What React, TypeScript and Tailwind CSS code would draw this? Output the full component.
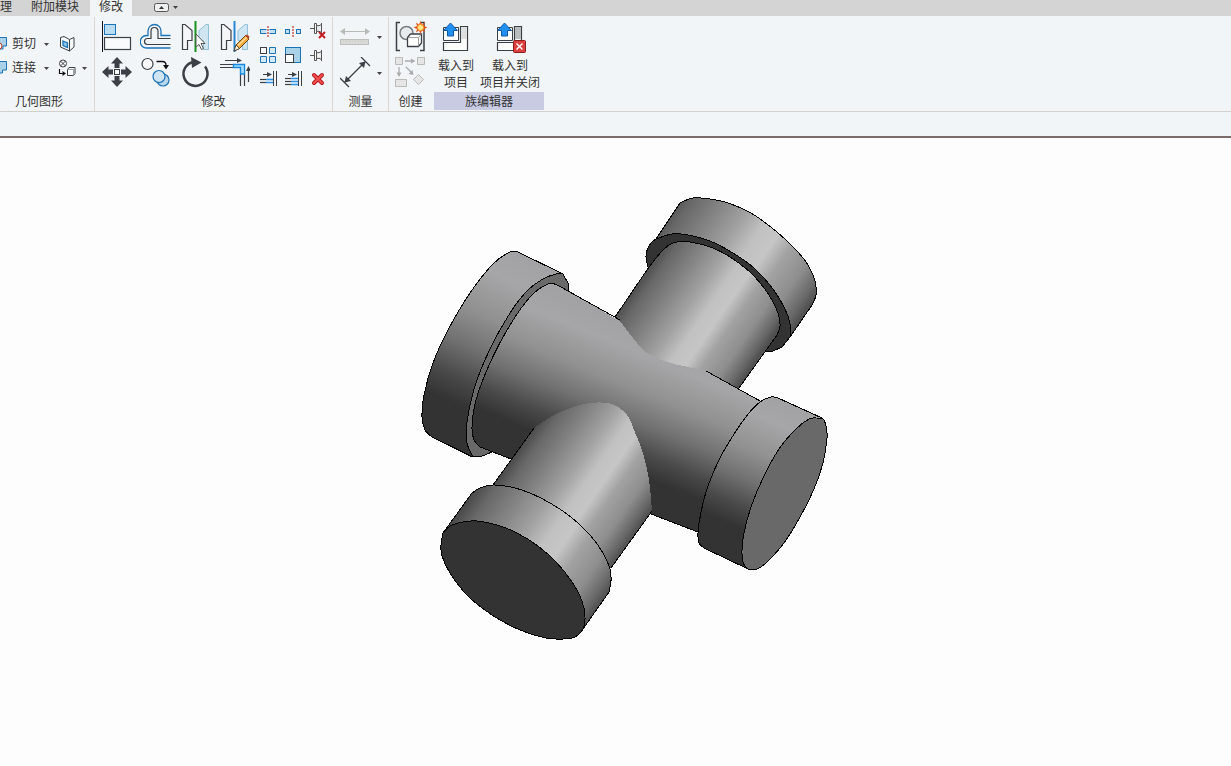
import type { ReactNode } from "react";

type Point = [number, number];

const INK = "#3b4046";
const BLUE = "#1b73b8";
const SKY = "#b9dcf0";

// Catmull-Rom through the points, returned as the tail of a path
function curve(pts: Point[]) {
  let d = "";
  for (let i = 0; i < pts.length - 1; i++) {
    const p0 = pts[i - 1] ?? pts[i];
    const p1 = pts[i];
    const p2 = pts[i + 1];
    const p3 = pts[i + 2] ?? p2;
    d += `C${p1[0] + (p2[0] - p0[0]) / 6} ${p1[1] + (p2[1] - p0[1]) / 6} ${p2[0] - (p3[0] - p1[0]) / 6} ${p2[1] - (p3[1] - p1[1]) / 6} ${p2[0]} ${p2[1]}`;
  }
  return d;
}

const open = (pts: Point[]) => `M${pts[0][0]} ${pts[0][1]}${curve(pts)}`;
const join = (pts: Point[]) => `L${pts[0][0]} ${pts[0][1]}${curve(pts)}`;

function Icon({ size = 32, children }: { size?: number; children: ReactNode }) {
  return (
    <svg width={size} height={size} viewBox={`0 0 ${size} ${size}`} fill="none" className="shrink-0" aria-hidden="true">
      {children}
    </svg>
  );
}

function Tool({ label, children }: { label: string; children: ReactNode }) {
  return (
    <button type="button" title={label} aria-label={label} className="flex items-center justify-center hover:bg-[#dce9f5]">
      {children}
    </button>
  );
}

function Caret() {
  return (
    <svg width="5" height="3" viewBox="0 0 5 3" className="shrink-0" aria-hidden="true">
      <path d="M0 0h5L2.5 3z" fill="#444" />
    </svg>
  );
}

function Panel({ title, highlight, className = "", children }: { title: string; highlight?: boolean; className?: string; children: ReactNode }) {
  return (
    <section className={`flex shrink-0 flex-col border-[#dcd6d2] ${className}`}>
      <div className="h-[75px]">{children}</div>
      <h2 className={`h-[18px] text-center leading-5 ${highlight ? "bg-[#c9cbe2]" : ""}`}>{title}</h2>
    </section>
  );
}

function AlignIcon() {
  return (
    <Icon>
      <path d="M1.5 0v31" stroke="#111" />
      <rect x="3.5" y="3.5" width="11" height="10" fill={SKY} stroke={BLUE} />
      <rect x="3.5" y="16.5" width="26" height="12" fill="#f8fafb" stroke={INK} strokeWidth="1.2" />
    </Icon>
  );
}

function OffsetIcon() {
  return (
    <Icon>
      <path d="M30.5 14.5H21V10a6.5 6.5 0 0 0-13 0v4.5H6.5a6 6 0 0 0 0 12.5h24" stroke={BLUE} strokeWidth="1.3" />
      <path d="M30.5 17.5H18V10a3.5 3.5 0 0 0-7 0v7.5H7.5a3 3 0 0 0 0 6h23" stroke={INK} strokeWidth="1.2" />
    </Icon>
  );
}

function MirrorHalves() {
  return (
    <>
      <path d="M3.5 3.5H6l7 6v10H8.5v9h-5z" fill="#f4f6f7" stroke={INK} strokeWidth="1.2" />
      <path d="M29.5 3.5H27l-7 6v10h4.5v9h5z" fill="#cfe6f2" stroke="#8fc0d8" />
    </>
  );
}

function MirrorPickIcon() {
  return (
    <Icon>
      <MirrorHalves />
      <path d="M16.5 0v31" stroke="#17921b" strokeWidth="2" />
      <path d="M17 13v13l3-2.5 2.5 5 2-1-2.5-5h4z" fill="#fff" stroke="#555" />
    </Icon>
  );
}

function MirrorDrawIcon() {
  return (
    <Icon>
      <MirrorHalves />
      <path d="M16.5 0v31" stroke="#2b86d2" strokeWidth="2" />
      <path d="M16 30l2-6 9.5-9.5 3.5 3.5-9.5 9.5z" fill="#f5a93a" stroke="#6e4419" />
      <path d="M18 24l3.5 3.5L16 30z" fill="#fff3d8" stroke="#333" strokeWidth=".8" />
      <path d="M27 14.5l3.5 3.5 1-2.5-2.5-2z" fill="#b5452a" />
      <path d="M20 24.5l8.5-8" stroke="#ffe1a0" strokeWidth="1.2" />
    </Icon>
  );
}

function MoveIcon() {
  return (
    <Icon>
      <path
        d="M16 0l6 6.5h-3.5V11h-5V6.5H10zM16 30l6-6.5h-3.5V19h-5v4.5H10zM1 15l6.5-6v3.5H12v5H7.5V21zM31 15l-6.5-6v3.5H20v5h4.500V21z"
        fill={INK}
      />
      <rect x="13.5" y="12.5" width="5" height="5" fill="#fff" stroke={INK} />
    </Icon>
  );
}

function CopyIcon() {
  return (
    <Icon>
      <circle cx="7.5" cy="7" r="5.5" fill="#f8fafb" stroke={INK} strokeWidth="1.2" />
      <path d="M16.5 4.5h6q3.5 0 3.5 4V9" stroke="#111" strokeWidth="1.3" />
      <path d="M23 8h6l-3 4.5z" fill="#111" />
      <circle cx="23" cy="23" r="6" fill="#b7d6ea" stroke={BLUE} strokeWidth="1.2" />
      <circle cx="19" cy="19.5" r="6" fill="#cfe5f3" stroke={BLUE} strokeWidth="1.2" />
    </Icon>
  );
}

function RotateIcon() {
  return (
    <Icon>
      <path d="M26 9.5A12 12 0 1 1 14.5 5" stroke={INK} strokeWidth="2.5" />
      <path d="M12 0l10.5 5.5L13 11z" fill={INK} />
    </Icon>
  );
}

function TrimCornerIcon() {
  return (
    <Icon>
      <path d="M7 3.5h13M2 7.5h13.5M2 10.5h13.5M22.5 17v12M26.5 17v12M30.5 25V13" stroke={INK} strokeWidth="1.2" />
      <path d="M19 1l5 2.5L19 6zM28 14l2.5-5 2.5 5z" fill={INK} />
      <path d="M15.5 7.5h11V17h-4v-6.5h-7z" fill="#a9dcff" stroke="#1688e0" strokeWidth="1.4" />
    </Icon>
  );
}

function SplitIcon() {
  return (
    <Icon size={18}>
      <rect x="1.5" y="7.5" width="15" height="4" fill="#c3e0f0" stroke={BLUE} />
      <path d="M9 3v12" stroke="#f3f6f8" strokeWidth="3" />
      <path d="M9 4v12" stroke="#c43328" strokeWidth="1.2" strokeDasharray="2 1" />
    </Icon>
  );
}

function SplitGapIcon() {
  return (
    <Icon size={18}>
      <rect x="1.5" y="7.5" width="4" height="4" fill="#c3e0f0" stroke={BLUE} />
      <rect x="12.5" y="7.5" width="4" height="4" fill="#c3e0f0" stroke={BLUE} />
      <path d="M9 4v12" stroke="#c43328" strokeWidth="1.2" strokeDasharray="2 1" />
    </Icon>
  );
}

function Pin() {
  return (
    <>
      <path d="M1 9.5h4" stroke="#555" />
      <path d="M7.5 6.5q2.500 1 5-1v8q-2.500-2-5-1z" fill="#eceff1" stroke="#555" />
      <path d="M5.500 4.500h2v10h-2zM12.500 4v11" fill="#fff" stroke="#555" />
    </>
  );
}

function UnpinIcon() {
  return (
    <Icon size={18}>
      <g transform="translate(0 -3)">
        <Pin />
      </g>
      <path d="M10 10l6 6M16 10l-6 6" stroke="#c51d22" strokeWidth="2" />
    </Icon>
  );
}

function ArrayIcon() {
  return (
    <Icon size={18}>
      <rect x="1.5" y="1.5" width="6" height="6" fill="#fff" stroke={INK} />
      <path d="M10.5 1.5h6v6h-6zM1.5 10.5h6v6h-6zM10.5 10.5h6v6h-6z" fill="#d5eaf5" stroke={BLUE} />
    </Icon>
  );
}

function ScaleIcon() {
  return (
    <Icon size={18}>
      <rect x="1.5" y="1.5" width="15" height="15" fill="#a9d2e8" stroke={BLUE} />
      <rect x="1.5" y="8.5" width="8" height="8" fill="#fff" stroke={INK} />
    </Icon>
  );
}

function ExtendIcon({ rows }: { rows: number[] }) {
  return (
    <Icon size={18}>
      <path d="M4 4.5h5M14.5 1v15M17.5 1v15" stroke={INK} />
      <path d="M8 2l5 2.5L8 7z" fill={INK} />
      {rows.map((y) => (
        <g key={y}>
          <path d={`M1 ${y}h6`} stroke={INK} strokeWidth="1.2" />
          <path d={`M7 ${y}h7`} stroke="#2a91e8" strokeWidth="1.5" />
        </g>
      ))}
    </Icon>
  );
}

function DeleteIcon() {
  return (
    <Icon size={18}>
      <path d="M5 5l8 8M13 5l-8 8" stroke="#b71820" strokeWidth="4" strokeLinecap="round" />
      <path d="M5 5l8 8M13 5l-8 8" stroke="#f2504e" strokeWidth="2" strokeLinecap="round" />
    </Icon>
  );
}

function MeasureIcon() {
  return (
    <Icon>
      <path d="M3 10.5h24" stroke="#b8bcb8" />
      <path d="M0 10.5L5 7v7zM30 10.5L25 7v7z" fill="#b8bcb8" />
      <rect x=".5" y="18.5" width="28" height="5" fill="#d9dad8" stroke="#bcbebc" />
      <path d="M3 20h24" stroke="#c5c7c5" strokeDasharray="1 2" />
    </Icon>
  );
}

function DimensionIcon() {
  return (
    <Icon>
      <path d="M5 25L25 5M21 0l9 9M0 21l9 9" stroke={INK} strokeWidth="1.3" />
      <path d="M4.5 25.5L6 19l5 5zM25.5 4.5L19 6l5 5z" fill={INK} />
    </Icon>
  );
}

function CreateSimilarIcon() {
  return (
    <Icon>
      <path d="M5 1.5H1.5v28H5M25 1.5h4v28h-4" stroke={INK} strokeWidth="1.5" />
      <circle cx="11.5" cy="12" r="6.5" fill="#e8ebed" stroke="#777d82" strokeWidth="1.5" />
      <path d="M12.5 16.5l3-3.5h11v9l-3 3.5h-11z" fill="#fff" stroke={INK} strokeWidth="1.3" />
      <path d="M12.5 16.5h11v9M23.5 16.5l3-3.5" stroke="#888" strokeWidth=".8" />
      <path
        d="M25.5 0L27 3.5l3-2L29 5l3.5 1.5L29 8l1 3.5-3-2-1.500 3.500L24 9.500l-3 2L22 8l-3.500-1.500L22 5l-1-3.500 3 2z"
        fill="#e2561e"
      />
      <circle cx="25.5" cy="6.5" r="3" fill="#ffe98a" stroke="#f39a2a" />
    </Icon>
  );
}

function CreateGroupIcon() {
  return (
    <Icon>
      <path d="M.5.5h7v7h-7zM22.5.5h7v7h-7zM.5 22.5h11v7H.5zM23.5 17.5l5 5-5 5-5-5z" fill="#e4e5e4" stroke="#b8bab8" />
      <path d="M10 4h7M4 10v7M11 10l5 5" stroke="#a9abab" strokeWidth="1.3" />
      <path d="M16 1.5L20.5 4 16 6.5zM1.5 15.5h5L4 20zM18.500 18l-1-5-4 4z" fill="#a9abab" />
    </Icon>
  );
}

function LoadIcon({ closing }: { closing?: boolean }) {
  return (
    <Icon>
      <path d="M3.5 6.5h15v13h-15z" fill="#fff" stroke={INK} />
      <path d="M20.5 5.5h7v24h-24v-8h17z" fill="#fbfcfc" stroke={INK} strokeWidth="1.2" />
      <path d="M21 6h6v12h-6z" fill={closing ? "#b9bcbe" : "#dcdedf"} />
      <path d="M10.5 2l7 7.5h-4V15h-6V9.5h-4z" fill="#1f8ff0" stroke="#1459a5" />
      {closing && (
        <>
          <rect x="19.5" y="19.5" width="12" height="12" rx="1" fill="#d9403e" stroke="#8f1d1e" />
          <path d="M22.5 22.5l6 6M28.5 22.5l-6 6" stroke="#fff" strokeWidth="1.4" />
        </>
      )}
    </Icon>
  );
}

function CutIcon() {
  return (
    <svg width="8" height="18" viewBox="0 0 8 18" fill="none" className="shrink-0" aria-hidden="true">
      <path d="M-5 2.5H6.5V11H3v3h-8" fill="#a9d2e8" stroke={BLUE} />
      <circle cx="-1" cy="11" r="3" fill="#fff" stroke="#c43328" />
    </svg>
  );
}

function JoinIcon() {
  return (
    <svg width="8" height="18" viewBox="0 0 8 18" fill="none" className="shrink-0" aria-hidden="true">
      <path d="M-5 2.5H6.5V11h-4v3H-5" fill="#a9d2e8" stroke={BLUE} />
    </svg>
  );
}

function WallIcon() {
  return (
    <Icon size={18}>
      <path d="M2.5 2.5L6 1.5l5.5 3 4.5-2V12l-4.5 4-9-4z" fill="#f7f9fa" stroke={INK} strokeLinejoin="round" />
      <path d="M11.5 4.5V16" stroke={INK} />
      <path d="M5 6l4.5 2v4.5L5 10.5z" fill="#8fc4e3" stroke={BLUE} strokeWidth="1.3" />
    </Icon>
  );
}

function DemolishIcon() {
  return (
    <Icon size={18}>
      <circle cx="5" cy="4.5" r="3.5" fill="#fff" stroke={INK} />
      <path d="M2.5 2l5 5M7.5 2l-5 5" stroke={INK} />
      <path d="M1.5 10v4.5H5" stroke="#111" strokeWidth="1.2" />
      <path d="M4.5 12L8 14.5 4.5 17z" fill="#111" />
      <path d="M9.5 10.5l1.5-2h6v6l-1.500 2h-6z" fill="#f8fafb" stroke={INK} />
      <path d="M9.5 10.5h6v6M15.5 10.5l1.500-2" stroke="#9a9ea2" />
    </Icon>
  );
}

function GeometryPanel() {
  return (
    <Panel title="几何图形" className="w-[95px] border-r [&>h2]:pr-4">
      <div className="flex h-full flex-col justify-center pt-[3px] whitespace-nowrap">
        <div className="flex h-6 items-center">
          <button type="button" className="flex items-center gap-1">
            <CutIcon />
            剪切
          </button>
          <button type="button" aria-label="剪切选项" className="ml-2">
            <Caret />
          </button>
          <button type="button" aria-label="墙洞口" className="ml-[9px]">
            <WallIcon />
          </button>
        </div>
        <div className="flex h-6 items-center">
          <button type="button" className="flex items-center gap-1">
            <JoinIcon />
            连接
          </button>
          <button type="button" aria-label="连接选项" className="ml-2">
            <Caret />
          </button>
          <button type="button" aria-label="拆除" className="ml-[9px]">
            <DemolishIcon />
          </button>
          <button type="button" aria-label="拆除选项" className="ml-1.5">
            <Caret />
          </button>
        </div>
      </div>
    </Panel>
  );
}

function ModifyPanel() {
  return (
    <Panel title="修改" className="w-[238px] border-r">
      <div className="flex gap-0.5 pt-[2px] pl-[2px]">
        <div className="grid grid-cols-[repeat(4,39px)] grid-rows-[repeat(2,36px)]">
          <Tool label="对齐"><AlignIcon /></Tool>
          <Tool label="偏移"><OffsetIcon /></Tool>
          <Tool label="镜像 - 拾取轴"><MirrorPickIcon /></Tool>
          <Tool label="镜像 - 绘制轴"><MirrorDrawIcon /></Tool>
          <Tool label="移动"><MoveIcon /></Tool>
          <Tool label="复制"><CopyIcon /></Tool>
          <Tool label="旋转"><RotateIcon /></Tool>
          <Tool label="修剪/延伸为角"><TrimCornerIcon /></Tool>
        </div>
        <div className="grid grid-cols-[repeat(3,25px)] grid-rows-[repeat(3,24px)]">
          <Tool label="拆分图元"><SplitIcon /></Tool>
          <Tool label="用间隙拆分"><SplitGapIcon /></Tool>
          <Tool label="解锁"><UnpinIcon /></Tool>
          <Tool label="阵列"><ArrayIcon /></Tool>
          <Tool label="缩放"><ScaleIcon /></Tool>
          <Tool label="锁定"><Icon size={18}><Pin /></Icon></Tool>
          <Tool label="修剪/延伸单个图元"><ExtendIcon rows={[9.5, 12.5]} /></Tool>
          <Tool label="修剪/延伸多个图元"><ExtendIcon rows={[8.5, 11.5, 14.5]} /></Tool>
          <Tool label="删除"><DeleteIcon /></Tool>
        </div>
      </div>
    </Panel>
  );
}

function MeasurePanel() {
  return (
    <Panel title="测量" className="w-14 border-r">
      <div className="grid grid-cols-[32px_5px] grid-rows-[repeat(2,36px)] items-center gap-x-[5px] pt-[2px] pl-[7px]">
        <Tool label="测量"><MeasureIcon /></Tool>
        <button type="button" aria-label="测量选项"><Caret /></button>
        <Tool label="对齐尺寸标注"><DimensionIcon /></Tool>
        <button type="button" aria-label="尺寸标注选项"><Caret /></button>
      </div>
    </Panel>
  );
}

function CreatePanel() {
  return (
    <Panel title="创建" className="w-[45px] [&>h2]:pr-0.5">
      <div className="grid grid-rows-[repeat(2,36px)] pt-[2px] pr-[2px]">
        <Tool label="创建类似实例"><CreateSimilarIcon /></Tool>
        <Tool label="创建组"><CreateGroupIcon /></Tool>
      </div>
    </Panel>
  );
}

function FamilyEditorPanel() {
  return (
    <Panel title="族编辑器" highlight className="w-[110px]">
      <div className="flex pt-1 leading-[17px]">
        <button type="button" className="flex w-11 flex-col items-center">
          <LoadIcon />
          <span className="pt-[5px]">载入到</span>
          <span>项目</span>
        </button>
        <button type="button" className="flex w-16 flex-col items-center">
          <LoadIcon closing />
          <span className="pt-[5px]">载入到</span>
          <span>项目并关闭</span>
        </button>
      </div>
    </Panel>
  );
}

function TabBar() {
  return (
    <nav className="flex h-4 items-start bg-[#d4d4d4] leading-[14px]">
      <button type="button" className="w-3 text-left">理</button>
      <button type="button" className="w-[78px] pl-2">附加模块</button>
      <button type="button" aria-current="page" className="h-4 w-[42px] bg-[#f2f5f8] pb-0.5 leading-[14px]">修改</button>
      <button type="button" aria-label="最小化功能区" className="flex h-[14px] items-center gap-1 pl-[22px]">
        <svg width="15" height="9" viewBox="0 0 15 9" aria-hidden="true">
          <rect x=".5" y=".5" width="14" height="8" rx="2" fill="#eef0f1" stroke="#555" />
          <path d="M5 6h5L7.500 3z" fill="#333" />
        </svg>
        <Caret />
      </button>
    </nav>
  );
}

const leftCapOuter: Point[] = [[518, 252], [510, 252], [493, 264], [470, 293], [448, 330], [433, 363], [424, 395], [422, 417], [425, 430], [432, 437]];
const leftRim: Point[] = [[563, 274], [556, 274], [543, 279], [527, 291], [510, 313], [490, 349], [475, 386], [467, 422], [467, 443], [473, 457]];
const mainStart: Point[] = [[568, 291], [557, 285], [548, 284], [531, 296], [510, 325], [490, 363], [476, 400], [472, 427], [474, 440], [480, 447]];
const backJoint: Point[] = [[620, 321], [633, 338], [647, 353], [667, 362], [688, 367], [707, 371]];
const backRim: Point[] = [[648, 267], [646, 256], [649, 246], [656, 239], [672, 234], [688, 235], [710, 241], [733, 253], [754, 268], [773, 289], [785, 309], [790, 324], [790, 337]];
const backCap: Point[] = [[680, 203], [693, 198], [710, 199], [728, 203], [751, 213], [777, 232], [797, 251], [808, 265], [815, 281], [816, 295], [812, 305]];
const backPipeTop: Point[] = [[649, 267], [662, 251], [673, 243], [690, 242], [713, 248], [733, 259], [753, 275], [769, 295], [778, 313], [780, 326], [777, 335]];
const frontJoint: Point[] = [[534, 428], [547, 419], [567, 409], [590, 403], [612, 404], [627, 415], [634, 430], [643, 453], [649, 480], [652, 511]];
const frontRim: Point[] = [[472, 493], [480, 488], [493, 485], [511, 487], [530, 493], [550, 503], [571, 517], [590, 535], [603, 553], [610, 569], [611, 581], [609, 592]];
const frontDisc: Point[] = [[443, 533], [450, 526], [463, 522], [477, 521], [497, 525], [517, 533], [538, 546], [557, 563], [572, 582], [582, 601], [585, 617], [583, 629], [575, 637], [563, 639], [546, 638], [520, 630], [492, 615], [467, 595], [450, 573], [442, 556], [441, 545], [443, 533]];
const rightRim: Point[] = [[778, 398], [771, 397], [760, 402], [749, 413], [736, 431], [720, 458], [708, 486], [701, 512], [698, 533], [699, 543], [704, 548]];
const rightDisc: Point[] = [[817, 418], [823, 419], [826, 426], [827, 438], [823, 463], [814, 489], [800, 517], [784, 543], [767, 562], [757, 569], [748, 569], [743, 562], [742, 550], [744, 533], [751, 507], [763, 478], [779, 449], [796, 429], [809, 419], [817, 418]];

function Shade({ id, from, to, stops }: { id: string; from: Point; to: Point; stops: [number, string][] }) {
  return (
    <linearGradient id={id} gradientUnits="userSpaceOnUse" x1={from[0]} y1={from[1]} x2={to[0]} y2={to[1]}>
      {stops.map(([offset, color]) => (
        <stop key={offset} offset={offset} stopColor={color} />
      ))}
    </linearGradient>
  );
}

const runStops: [number, string][] = [[0, "#a2a2a4"], [0.15, "#a6a6a8"], [0.35, "#919191"], [0.52, "#717171"], [0.68, "#494949"], [0.8, "#333333"], [1, "#333333"]];
const branchStops: [number, string][] = [[0, "#474747"], [0.1, "#686868"], [0.25, "#848484"], [0.4, "#a2a2a2"], [0.52, "#c1c1c1"], [0.62, "#c6c6c6"], [0.72, "#a2a2a2"], [0.85, "#8e8e8e"], [0.95, "#686868"], [1, "#505050"]];

// Four-way pipe fitting
function PipeCross() {
  return (
    <svg width="431" height="460" viewBox="400 188 431 460" className="shrink-0" role="img" aria-label="四通管件三维视图">
      <defs>
        <Shade id="leftCap" from={[530, 256]} to={[444, 444]} stops={runStops} />
        <Shade id="run" from={[600, 309]} to={[534, 469]} stops={runStops} />
        <Shade id="rightCap" from={[796, 405]} to={[727, 560]} stops={runStops} />
        <Shade id="backCap" from={[660, 215]} to={[803, 315]} stops={branchStops} />
        <Shade id="backPipe" from={[629, 290]} to={[748, 372]} stops={branchStops} />
        <Shade id="frontPipe" from={[512, 456]} to={[631, 539]} stops={branchStops} />
        <Shade id="frontCap" from={[459, 510]} to={[598, 607]} stops={branchStops} />
      </defs>
      <g stroke="#000" strokeWidth="1" strokeLinejoin="round" shapeRendering="crispEdges">
        <path d={`${open(backRim)}L782 347L773 351L765 352L649 267Z`} fill="#333" />
        <path d={`M656 239${join(backCap)}L790 337${join([...backRim].slice(3).reverse())}Z`} fill="url(#backCap)" />
        <path d={`${open(backPipeTop)}L739 388L700 420L615 317Z`} fill="url(#backPipe)" stroke="none" />
        <path d={`M615 317${join(backPipeTop)}L739 388`} fill="none" />

        <path d={`${open(leftCapOuter)}L470 456L480 457L492 452L520 380L568 291L568 283L563 274Z`} fill="#696969" />
        <path d={`${open(leftCapOuter)}L473 457${join([...leftRim].reverse())}Z`} fill="url(#leftCap)" />
        <path
          d={`${open(mainStart)}L511 459L580 500L652 514L698 532L765 470L762 402L707 371${join([...backJoint].reverse())}Z`}
          fill="url(#run)"
          stroke="none"
        />
        <path d={`${open([...mainStart].reverse())}L620 320M480 447L511 459M651 514L698 532M706 371L762 402`} fill="none" />

        <path d={`${open(rightRim)}L748 569L800 500L822 418Z`} fill="url(#rightCap)" />
        <path d={open(rightDisc)} fill="#696969" />

        <path d={`${open(frontJoint)}L611 568L550 560L493 485Z`} fill="url(#frontPipe)" stroke="none" />
        <path d="M493 485L534 428M652 511L611 568" fill="none" />
        <path d={`${open(frontRim)}L583 629L520 600L443 533Z`} fill="url(#frontCap)" />
        <path d={open(frontDisc)} fill="#333" />
      </g>
    </svg>
  );
}

export default function App() {
  return (
    <div className="flex min-h-screen flex-col overflow-hidden bg-[#fdfdfd] font-['Liberation_Sans','Noto_Sans_CJK_SC',sans-serif] text-xs text-[#333]">
      <header>
        <TabBar />
        {/* Ribbon */}
        <div className="flex h-24 border-b border-[#d3d1d0] bg-[#f2f5f8] pt-px">
          <GeometryPanel />
          <ModifyPanel />
          <MeasurePanel />
          <CreatePanel />
          <FamilyEditorPanel />
        </div>
        {/* Options bar */}
        <div className="h-[26px] border-b-2 border-[#7d6b6b] bg-[#f2f5f8]" />
      </header>
      <main className="flex flex-1 justify-center pt-[50px]">
        <PipeCross />
      </main>
    </div>
  );
}
